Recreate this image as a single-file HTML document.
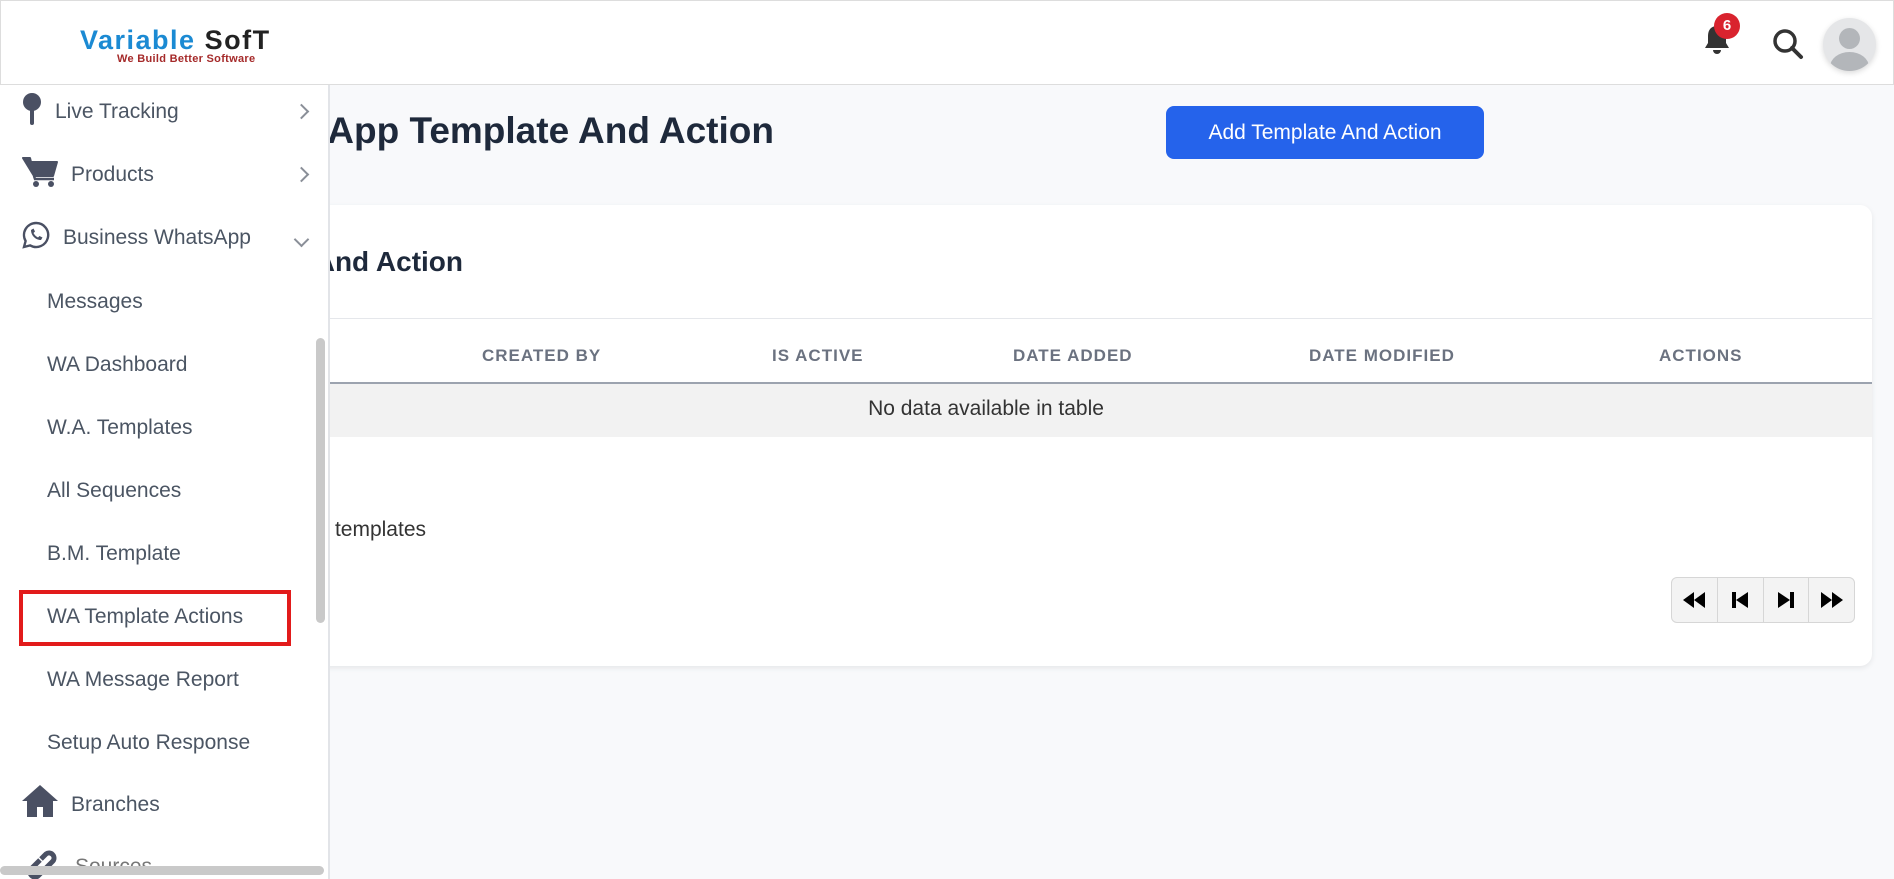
<!DOCTYPE html>
<html><head><meta charset="utf-8"><style>
*{box-sizing:border-box;margin:0;padding:0}
body{width:1894px;height:879px;overflow:hidden;background:#f8f9fb;font-family:"Liberation Sans",sans-serif;position:relative;color:#1f2937}
.abs{position:absolute;white-space:nowrap}
#hdr{position:absolute;left:0;top:0;width:1894px;height:85px;background:#fff;border:1px solid #ddd;z-index:5}
#side{position:absolute;left:0;top:85px;width:330px;height:794px;background:#fff;border-right:2px solid #e2e4e8;z-index:4;overflow:hidden}
.si{position:absolute;font-size:21px;color:#4b5563;white-space:nowrap}
.chev{position:absolute;left:296px;width:11px;height:11px;border-right:2px solid #8a8f98;border-top:2px solid #8a8f98;transform:rotate(45deg)}
.card{position:absolute;left:250px;top:205px;width:1622px;height:461px;background:#fff;border-radius:12px;box-shadow:0 2px 6px rgba(0,0,0,.08)}
.th{position:absolute;top:346px;font-size:17px;font-weight:bold;color:#6b7280;letter-spacing:1px;white-space:nowrap}
.pg{flex:1;display:flex;align-items:center;justify-content:center}
</style></head><body>
<div id="hdr">
 <div class="abs" style="left:79px;top:24px;font-size:27px;letter-spacing:1.5px;font-weight:bold"><span style="color:#1b8ad3">Variable</span> <span style="color:#222">SofT</span></div>
 <div class="abs" style="left:116px;top:52px;font-size:11px;color:#a52a2a;font-weight:bold;letter-spacing:.3px">We Build Better Software</div>
 <svg class="abs" style="left:1700px;top:22px" width="32" height="36" viewBox="0 0 32 36"><path d="M16 3c-6 0-9 4-9 10v7l-3 5h24l-3-5v-7c0-6-3-10-9-10z" fill="#333"/><path d="M12 27a4 4 0 0 0 8 0z" fill="#333"/></svg>
 <div class="abs" style="left:1713px;top:12px;width:26px;height:26px;border-radius:50%;background:#d9232e;color:#fff;font-size:15px;font-weight:bold;text-align:center;line-height:26px">6</div>
 <svg class="abs" style="left:1770px;top:26px" width="36" height="36" viewBox="0 0 36 36"><circle cx="14" cy="14" r="10" fill="none" stroke="#333" stroke-width="3.5"/><path d="M21 21l9 9" stroke="#333" stroke-width="4" stroke-linecap="round"/></svg>
 <div class="abs" style="left:1822px;top:17px;width:53px;height:53px;border-radius:50%;background:#e5e6e8;box-shadow:0 2px 6px rgba(0,0,0,.15);overflow:hidden">
  <div style="position:absolute;left:16px;top:10px;width:21px;height:21px;border-radius:50%;background:#b3b6ba"></div>
  <div style="position:absolute;left:7px;top:34px;width:39px;height:30px;border-radius:50%;background:#b3b6ba"></div>
 </div>
</div>
<div id="side">
 <svg class="abs" style="left:22px;top:8px" width="20" height="34" viewBox="0 0 20 34"><circle cx="10" cy="9" r="9" fill="#4a5063"/><rect x="8" y="16" width="4" height="16" rx="2" fill="#4a5063"/></svg>
 <div class="si" style="left:55px;top:15px">Live Tracking</div><div class="chev" style="top:21px"></div>
 <svg class="abs" style="left:22px;top:71px" width="36" height="32" viewBox="0 0 36 32"><path d="M1 2h7l1 4h26l-4 14H12z" fill="#4a5063" stroke="#4a5063" stroke-width="2" stroke-linejoin="round"/><path d="M12 20l1 3h19" stroke="#4a5063" stroke-width="2.5" fill="none"/><circle cx="14" cy="28" r="3" fill="#4a5063"/><circle cx="29" cy="28" r="3" fill="#4a5063"/></svg>
 <div class="si" style="left:71px;top:78px">Products</div><div class="chev" style="top:84px"></div>
 <svg class="abs" style="left:22px;top:136px" width="28" height="28" viewBox="0 0 28 28"><path d="M14 2a12 12 0 0 0-10.4 18L2 26l6.2-1.6A12 12 0 1 0 14 2z" fill="none" stroke="#4a5063" stroke-width="2.4"/><path d="M9 9c0 5 4 10 10 10l1.5-2.5-3-1.5-1.5 1.5c-2-1-3.5-2.5-4.5-4.5l1.5-1.5-1.5-3z" fill="#4a5063"/></svg>
 <div class="si" style="left:63px;top:141px">Business WhatsApp</div><div class="chev" style="top:149px;transform:rotate(135deg)"></div>
 <div class="si" style="left:47px;top:205px">Messages</div>
 <div class="si" style="left:47px;top:268px">WA Dashboard</div>
 <div class="si" style="left:47px;top:331px">W.A. Templates</div>
 <div class="si" style="left:47px;top:394px">All Sequences</div>
 <div class="si" style="left:47px;top:457px">B.M. Template</div>
 <div class="abs" style="left:19px;top:505px;width:272px;height:56px;border:4px solid #e21b1b"></div>
 <div class="si" style="left:47px;top:520px">WA Template Actions</div>
 <div class="si" style="left:47px;top:583px">WA Message Report</div>
 <div class="si" style="left:47px;top:646px">Setup Auto Response</div>
 <svg class="abs" style="left:22px;top:700px" width="36" height="32" viewBox="0 0 36 32"><path d="M18 0L0 16h5v16h10v-10h6v10h10V16h5z" fill="#4a5063"/></svg>
 <div class="si" style="left:71px;top:708px">Branches</div>
 <svg class="abs" style="left:22px;top:765px" width="40" height="30" viewBox="0 0 40 30"><g fill="none" stroke="#4a5063" stroke-width="5"><path d="M18 10l-9 9a5 5 0 0 0 7 7l5-5"/><path d="M22 20l9-9a5 5 0 0 0-7-7l-5 5"/></g></svg>
 <div class="si" style="left:75px;top:770px;color:#777">Sources</div>
 <div class="abs" style="left:316px;top:253px;width:9px;height:285px;border-radius:5px;background:#c9c9c9"></div>
 <div class="abs" style="left:0;top:781px;width:324px;height:9px;border-radius:5px;background:#c9c9c9"></div>
</div>
<div class="abs" style="right:1120px;top:110px;font-size:37px;font-weight:bold;color:#1e293b">Business WhatsApp Template And Action</div>
<div class="abs" style="left:1166px;top:106px;width:318px;height:53px;border-radius:8px;background:#2563eb;color:#fff;font-size:21px;text-align:center;line-height:53px">Add Template And Action</div>
<div class="card">
 <div style="position:absolute;left:0;right:0;top:113px;border-top:1px solid #e5e7eb"></div>
 <div style="position:absolute;left:0;right:0;top:177px;height:55px;border-top:2px solid #9ca3af;background:#f2f2f2"></div>
 <div class="abs" style="left:736px;top:192px;transform:translateX(-50%);font-size:21px;color:#333">No data available in table</div>
 <div class="abs" style="left:1421px;top:372px;width:184px;height:46px;border:1px solid #d6d6d6;border-radius:6px;background:#f3f3f3;display:flex">
  <div class="pg" style="border-right:1px solid #d6d6d6"><svg width="22" height="16"><path d="M11 0v16L0 8zM22 0v16L11 8z" fill="#000"/></svg></div>
  <div class="pg" style="border-right:1px solid #d6d6d6"><svg width="16" height="16"><rect x="0" y="0" width="4" height="16"/><path d="M16 0v16L4 8z"/></svg></div>
  <div class="pg" style="border-right:1px solid #d6d6d6"><svg width="16" height="16"><path d="M0 0v16L12 8z"/><rect x="12" y="0" width="4" height="16"/></svg></div>
  <div class="pg"><svg width="22" height="16"><path d="M0 0v16L11 8zM11 0v16L22 8z" fill="#000"/></svg></div>
 </div>
</div>
<div class="abs" style="right:1431px;top:246px;font-size:28px;font-weight:bold;color:#1e293b">Template And Action</div>
<div class="th" style="left:482px">CREATED BY</div>
<div class="th" style="left:772px">IS ACTIVE</div>
<div class="th" style="left:1013px">DATE ADDED</div>
<div class="th" style="left:1309px">DATE MODIFIED</div>
<div class="th" style="left:1659px">ACTIONS</div>
<div class="abs" style="right:1468px;top:518px;font-size:21px;color:#333">Showing 0 to 0 of 0 templates</div>
</body></html>
